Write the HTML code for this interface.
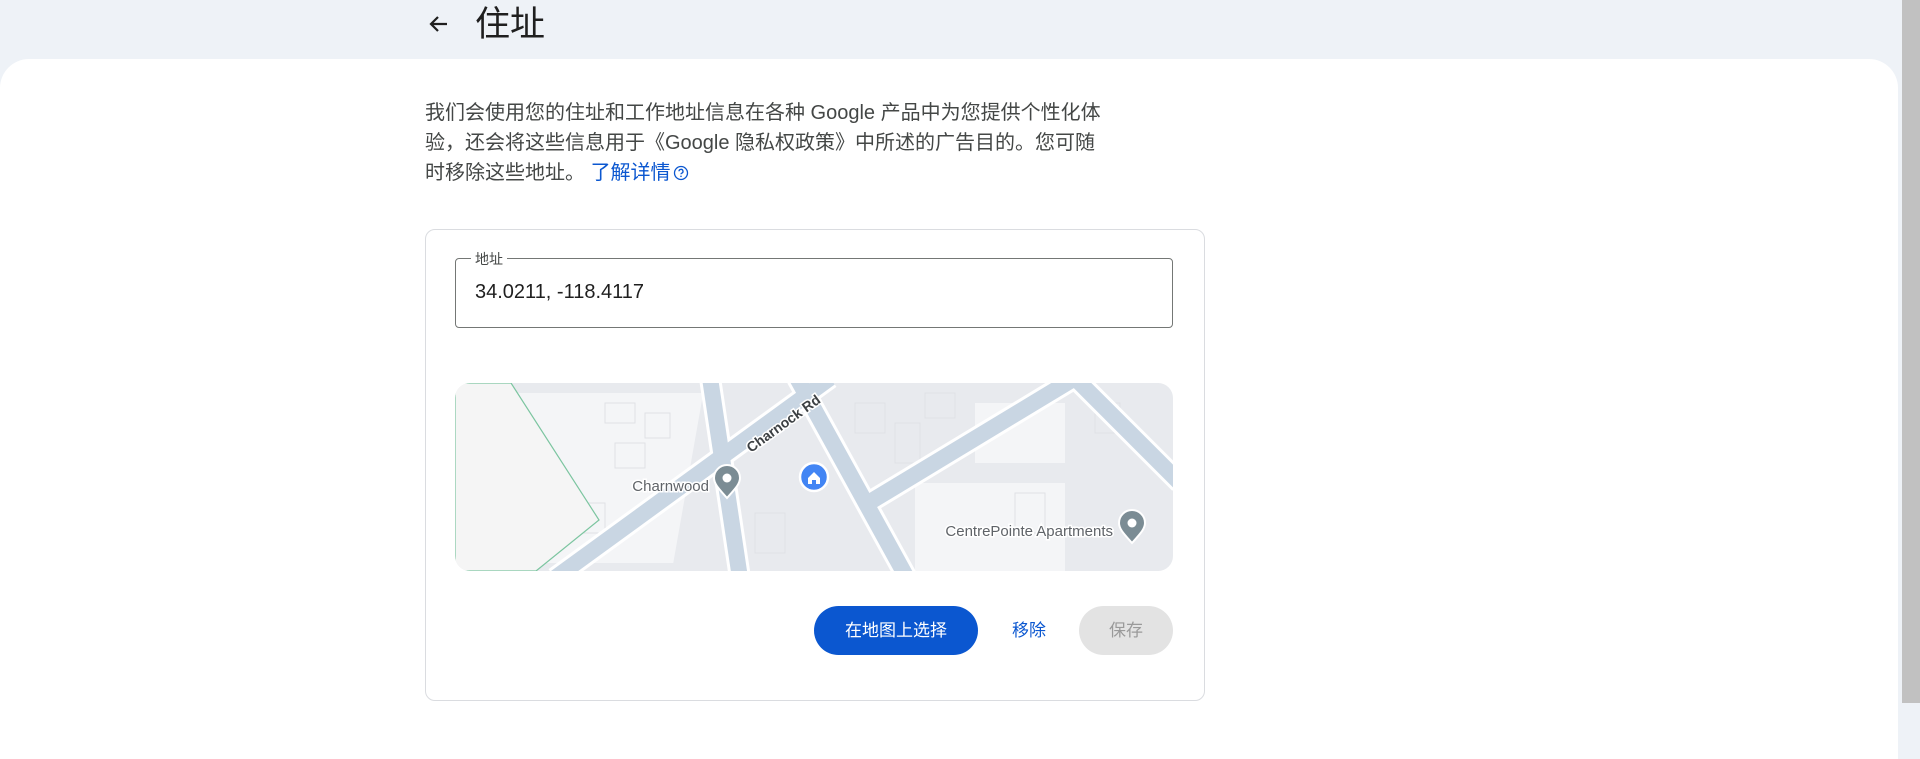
<!DOCTYPE html>
<html><head><meta charset="utf-8"><style>
*{margin:0;padding:0;box-sizing:border-box}
body{width:1920px;height:703px;overflow:hidden;background:#eef2f7;font-family:"Liberation Sans","Noto Sans CJK SC",sans-serif;position:relative}
.panel{position:absolute;left:0;top:59px;width:1898px;height:700px;background:#fff;border-radius:29px 29px 0 0}
.sb{position:absolute;left:1902px;top:0;width:18px;height:703px;background:#c1c1c1}
.title{position:absolute;left:475px;top:3px;font-size:35px;color:#1f1f1f;line-height:44px}
.arrow{position:absolute;left:427px;top:12px}
.para{position:absolute;left:425px;top:98px;width:690px;font-size:20px;line-height:30px;color:#444746}
.para a{color:#0b57d0;text-decoration:none}
.card{position:absolute;left:425px;top:229px;width:780px;height:472px;border:1px solid #dadce0;border-radius:10px}
.input{position:absolute;left:455px;top:258px;width:718px;height:70px;border:1px solid #747775;border-radius:4px}
.lbl{position:absolute;left:471px;top:250px;font-size:14px;background:#fff;padding:0 4px;color:#444746;line-height:18px}
.val{position:absolute;left:475px;top:281px;font-size:20px;color:#1f1f1f}
.map{position:absolute;left:455px;top:383px;width:718px;height:188px;border-radius:15px;overflow:hidden}
.btn{position:absolute;top:606px;height:49px;border-radius:25px;font-size:17px;line-height:49px;text-align:center}
</style></head><body>
<div class="panel"></div>
<div class="sb"></div>
<svg class="arrow" width="24" height="24" viewBox="0 0 24 24"><path d="M20 12H5M11 5l-7 7 7 7" stroke="#1f1f1f" stroke-width="2.2" fill="none"/></svg>
<div class="title">住址</div>
<div class="para">我们会使用您的住址和工作地址信息在各种 Google 产品中为您提供个性化体验，还会将这些信息用于《Google 隐私权政策》中所述的广告目的。您可随时移除这些地址。 <a>了解详情<svg width="16" height="16" viewBox="0 0 16 16" style="vertical-align:-2px;margin-left:2px"><circle cx="8" cy="8" r="6.5" stroke="#0b57d0" stroke-width="1.3" fill="none"/><path d="M6 6.3a2 2 0 1 1 2.7 1.9c-.5.2-.7.6-.7 1.1" stroke="#0b57d0" stroke-width="1.3" fill="none"/><circle cx="8" cy="11.3" r=".8" fill="#0b57d0"/></svg></a></div>
<div class="card"></div>
<div class="input"></div>
<div class="lbl">地址</div>
<div class="val">34.0211, -118.4117</div>
<div class="map"><svg width="718" height="188" viewBox="0 0 718 188">
<rect width="718" height="188" fill="#e8eaee"/>
<g fill="#f4f5f7">
<rect x="60" y="10" width="190" height="170" transform="skewX(-10)"/>
<rect x="460" y="100" width="150" height="90"/>
<rect x="520" y="20" width="90" height="60"/>
</g>
<g fill="none" stroke="#dfe1e6" stroke-width="1">
<path d="M150 20h30v20h-30zM190 30h25v25h-25zM160 60h30v25h-30zM120 120h30v30h-30zM300 130h30v40h-30zM400 20h30v30h-30zM440 40h25v40h-25zM470 10h30v25h-30zM560 110h30v40h-30zM640 20h25v30h-25z"/>
</g>
<g stroke="#fff" stroke-width="22" fill="none">
<path d="M100 195L375 -5"/><path d="M405 125L620 -5"/><path d="M255 -5L285 195"/><path d="M342 -5L452 195"/><path d="M620 -5L725 100"/>
</g>
<g stroke="#c9d6e3" stroke-width="16" fill="none">
<path d="M100 195L375 -5"/><path d="M405 125L620 -5"/><path d="M255 -5L285 195"/><path d="M342 -5L452 195"/><path d="M620 -5L725 100"/>
</g>
<path d="M0 0H56L144 137L81 188H0Z" fill="#f5f5f5" stroke="#7cc5a0" stroke-width="1.2"/>
<text x="296" y="70" transform="rotate(-36 296 70)" font-family="Liberation Sans" font-size="14" font-weight="bold" fill="#3c4043" stroke="#fff" stroke-width="3" paint-order="stroke">Charnock Rd</text>
<text x="254" y="108" text-anchor="end" font-family="Liberation Sans" font-size="15" fill="#5f6368" stroke="#fff" stroke-width="3" paint-order="stroke">Charnwood</text>
<text x="658" y="153" text-anchor="end" font-family="Liberation Sans" font-size="15" fill="#5f6368" stroke="#fff" stroke-width="3" paint-order="stroke">CentrePointe Apartments</text>
<g><path d="M272 115c-8-9-13-14-13-20a13 13 0 0 1 26 0c0 6-5 11-13 20z" fill="#7b8c94" stroke="#fff" stroke-width="2"/><circle cx="272" cy="95" r="4.5" fill="#fff"/></g>
<g><path d="M677 160c-8-9-13-14-13-20a13 13 0 0 1 26 0c0 6-5 11-13 20z" fill="#7b8c94" stroke="#fff" stroke-width="2"/><circle cx="677" cy="140" r="4.5" fill="#fff"/></g>
<g><circle cx="359" cy="94" r="14" fill="#4285f4" stroke="#fff" stroke-width="2.5"/><path d="M353 95l6-6 6 6v6h-4v-4h-4v4h-4z" fill="#fff"/></g>
</svg></div>
<div class="btn" style="left:814px;width:164px;background:#0b57d0;color:#fff">在地图上选择</div>
<div class="btn" style="left:1000px;width:58px;color:#0b57d0">移除</div>
<div class="btn" style="left:1079px;width:94px;background:#e3e3e3;color:#9a9a9a">保存</div>
</body></html>
